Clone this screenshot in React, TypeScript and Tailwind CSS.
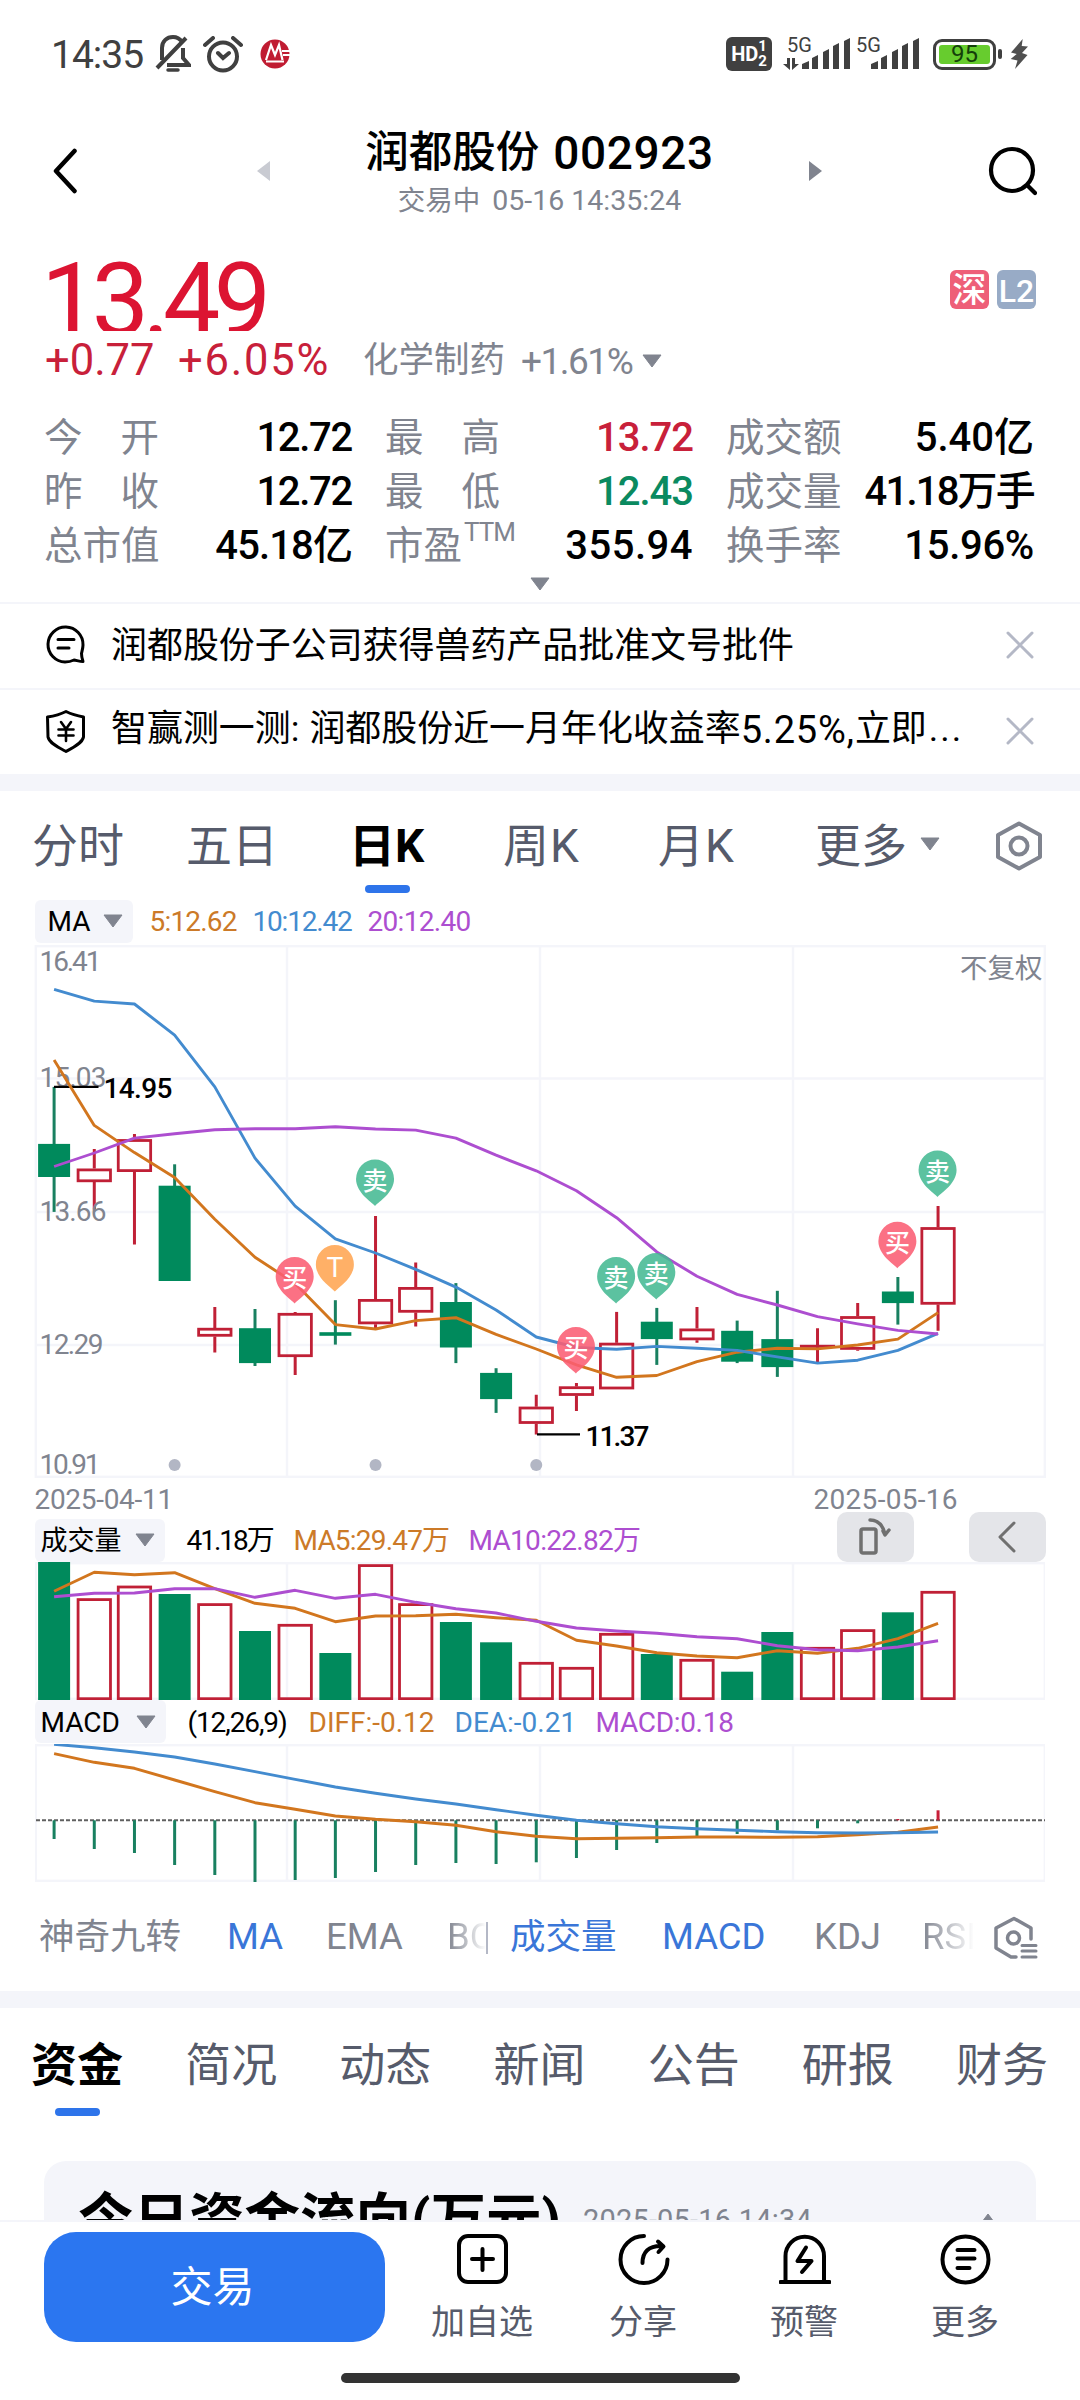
import React from 'react';

const N = 23;
const xAt = (i: number) => 19.1 + i * 40.18;

// [up, wickTop, wickBottom, bodyTop, bodyBottom]
type Candle = [boolean, number, number, number, number];

const candles: Candle[] = [
  [false, 141.9, 266.9, 198.9, 232],
  [true, 204, 264.4, 223.6, 237.1],
  [true, 189.1, 299.6, 194.2, 226.9],
  [false, 219.3, 336, 240.7, 336],
  [true, 362.1, 407.6, 382.9, 391.6],
  [false, 364, 421, 383.2, 418.1],
  [true, 366.9, 430.1, 368, 412],
  [false, 355.2, 399.6, 387.2, 390.8],
  [true, 270.9, 382.9, 354.1, 379.2],
  [true, 317.4, 381.4, 342.1, 367.6],
  [false, 338.1, 418.1, 357, 402.5],
  [false, 423.2, 467.9, 427.9, 454.1],
  [true, 449.8, 489.4, 461.7, 478.8],
  [true, 438.1, 466.1, 441.4, 450.8],
  [true, 366.9, 444.3, 397.8, 444.3],
  [false, 362.9, 419.9, 376.7, 394.1],
  [true, 362.1, 397.8, 383.6, 395.2],
  [false, 375.6, 418.1, 385.8, 416.7],
  [false, 345.8, 431.9, 394.1, 422.1],
  [true, 383.2, 418.1, 399.9, 401.8],
  [true, 358.1, 405.8, 371.2, 404.7],
  [false, 332, 379.6, 346.5, 358.1],
  [true, 261.1, 385.8, 282.2, 359.6],
];

const ma5 = [115, 180.4, 207.6, 232.4, 274.2, 312.3, 338.5, 379.6, 384, 375.6, 372.7, 389.4, 404, 419.9, 432.3, 430.5, 416.7, 407.2, 403.2, 403.9, 400, 394.1, 367.6];
const ma10 = [44.4, 56.1, 59, 90.2, 141.9, 213.1, 261.1, 293.8, 308, 324.3, 342.1, 365, 392, 402.5, 404.3, 401.4, 403.2, 405.4, 411.9, 418.1, 415.2, 405.4, 388.3];
const ma20 = [221.5, 208, 193.1, 188.7, 184.7, 183.7, 183.7, 181.8, 184, 185.1, 193.1, 210.2, 225.8, 245.8, 272.7, 306.9, 331.2, 349.4, 360, 371.6, 378.9, 385.4, 389];

const volumeTops = [0, 36.3, 23.7, 32, 41.3, 69, 62, 91, 2.3, 41.3, 60, 80.3, 100, 105, 71, 92, 97, 109.7, 70, 85, 67.3, 50.3, 29];
const volMa5 = [29.3, 10.3, 12.7, 10.7, 26.7, 41.3, 46.3, 59.7, 54, 53.7, 52.3, 55.7, 58.3, 78.3, 84, 90.7, 94, 95.7, 88.7, 91.3, 86.3, 76.7, 61.3];
const volMa10 = [34.7, 31.3, 31, 26.7, 26.7, 35.3, 28.3, 36.3, 32.3, 40.3, 46.7, 51, 59.3, 66, 69, 71.3, 74.7, 76.7, 83.7, 87.7, 88.7, 85, 78.7];

const macdEnds = [95, 105, 109, 121, 131, 138, 136, 134, 128, 121, 119, 120, 118.3, 114, 106, 99, 92, 90, 86.3, 84.3, 79.3, 75, 66.3];
const dea = [0.3, 3.7, 8, 13, 20, 27.7, 35.3, 43, 49.3, 55, 60, 65.7, 71.3, 76.3, 79.7, 82.7, 84.7, 86.3, 87.7, 88.7, 89, 88.7, 88];
const diff = [9.7, 18.3, 24.3, 36, 47.7, 58.7, 65.3, 72, 75.3, 77.7, 81.3, 87.7, 92.3, 94.7, 94.3, 93.7, 93, 93, 93.3, 92.7, 90.7, 88.3, 83];

const RED = '#c02036';
const GREEN = '#008a5c';
const ORANGE = '#d2761e';
const BLUE = '#438bcf';
const PURPLE = '#ad4ed0';
const GRID = '#f4f5fa';

const markers = [
  { i: 6, top: 312, label: '买', color: '#fb5d73' },
  { i: 7, top: 300, label: 'T', color: '#ffa552' },
  { i: 8, top: 214.6, label: '卖', color: '#45ba93' },
  { i: 13, top: 382, label: '买', color: '#fb5d73' },
  { i: 14, top: 312, label: '卖', color: '#45ba93' },
  { i: 15, top: 308, label: '卖', color: '#45ba93' },
  { i: 21, top: 276.7, label: '买', color: '#fb5d73' },
  { i: 22, top: 205.5, label: '卖', color: '#45ba93' },
];

const Line: React.FC<{ values: number[]; color: string }> = ({ values, color }) => (
  <polyline
    points={values.map((v, i) => `${xAt(i)},${v}`).join(' ')}
    fill="none"
    stroke={color}
    strokeWidth="2.9"
    strokeLinejoin="round"
  />
);

const Grid: React.FC<{ h: number; rows?: number[] }> = ({ h, rows = [] }) => (
  <g stroke={GRID} strokeWidth="2.4" fill="none">
    <rect x="0.8" y="1.2" width="1009" height={h - 2.4} />
    {[252, 505, 758].map((x) => (
      <path key={x} d={`M${x} 1V${h - 1}`} />
    ))}
    {rows.map((y) => (
      <path key={y} d={`M1 ${y}H1010`} />
    ))}
  </g>
);

const Caret: React.FC<{ className?: string; up?: boolean }> = ({ className = 'w-5 h-3.5', up }) => (
  <svg className={`shrink-0 text-[#80848f] ${className}`} viewBox="0 0 20 14" preserveAspectRatio="none">
    <path d={up ? 'M1 13L10 1L19 13Z' : 'M1 1H19L10 13Z'} fill="currentColor" stroke="currentColor" strokeLinejoin="round" />
  </svg>
);

const Signal: React.FC = () => (
  <svg className="w-12 h-8" viewBox="0 0 48 32" fill="#404040">
    <path d="M0 31v-5l7-3v8zM10 31V20l6-3v14zM21 31V14l6-3v20zM31 31V8l6-3v26zM42 31V3l6-3v31z" />
  </svg>
);

const StatusBar: React.FC = () => (
  <div className="flex h-[108px] items-center px-[51px] text-[#404040]">
    <span className="w-[104px] pt-[3px] text-[39px] leading-none tracking-[-1px]">14:35</span>
    <svg className="w-9 h-[38px]" viewBox="0 0 36 38" fill="none" stroke="currentColor" strokeWidth="4">
      <path d="M7 25V13c0-7 5-11 11-11 4 0 7 2 9 5M28 13v10l6 7H12M2 33L31 3" />
      <path d="M13 35h10" strokeWidth="3.500" strokeLinecap="round" />
    </svg>
    <svg className="ml-3 w-10 h-[37px]" viewBox="0 0 40 37" fill="none" stroke="currentColor" strokeWidth="4">
      <circle cx="20" cy="20.5" r="14" />
      <path d="M15 17l5 5 6-5M2 9l8-7M38 9l-8-7" strokeLinecap="round" />
    </svg>
    <svg className="ml-[17px] w-[30px] h-[30px]" viewBox="0 0 30 30">
      <circle cx="15" cy="15" r="14.5" fill="#c01c32" />
      <path d="M6 21L11 6l4 10 4-10 3.500 15M6 22.500h18M22 12h8M23 16h7" fill="none" stroke="#fff" strokeWidth="2.2" />
    </svg>
    <div className="ml-auto flex items-center">
      <div className="flex h-[34px] w-[46px] items-center justify-center rounded-md bg-[#404040] text-white">
        <span className="text-[20px] font-bold leading-none">HD</span>
        <span className="flex flex-col text-[15px] font-bold leading-[15px]">
          <span>1</span>
          <span>2</span>
        </span>
      </div>
      <div className="relative ml-[30px] h-8 w-12">
        <Signal />
        <span className="absolute -left-[15px] -top-[3px] text-[20px] leading-none">5G</span>
        <svg className="absolute -left-[19px] top-5 h-3 w-4" viewBox="0 0 16 12" fill="#404040">
          <path d="M4 0h3v12L0 6h4zM9 0h3v6h4l-7 6z" />
        </svg>
      </div>
      <div className="relative ml-[21px] h-8 w-12">
        <Signal />
        <span className="absolute -left-[15px] -top-[3px] text-[20px] leading-none">5G</span>
      </div>
      <div className="ml-3.5 flex h-[31px] w-[63px] rounded-[9px] border-[3.5px] border-[#404040] p-[3px]">
        <div className="flex flex-1 items-center justify-center rounded-[3px] bg-[#67cc2e] text-[24px] leading-none text-[#14400a]">95</div>
      </div>
      <div className="ml-0.5 h-2.5 w-1 rounded-sm bg-[#404040]" />
      <svg className="ml-2 h-[31px] w-[19px]" viewBox="0 0 19 31" fill="#505050">
        <path d="M12.700 0L1 13.500 6.700 15 .7 20l6.800 1.500L5 30l12.500-14-5.500-2 6-6.500-6.300-.5z" />
      </svg>
    </div>
  </div>
);

const Header: React.FC = () => (
  <div className="flex h-[132px] items-start px-[43px] pt-10">
    <svg className="ml-2.5 h-[46px] w-6" viewBox="0 0 24 46" fill="none" stroke="#000" strokeWidth="4.5" strokeLinecap="round" strokeLinejoin="round">
      <path d="M21.500 3L3 23l18.500 20" />
    </svg>
    <svg className="ml-[180px] mt-[13px] h-5 w-[13px]" viewBox="0 0 13 20" fill="#c9cbd2">
      <path d="M13 0v20L0 10z" />
    </svg>
    <div className="-mt-[18px] flex w-[539px] flex-col items-center">
      <div className="flex h-[46px] items-center text-[46px] font-medium leading-none text-black">
        <span className="mr-3.5 text-[43.5px]">润都股份</span>
        <span className="tracking-[0.6px]">002923</span>
      </div>
      <div className="mt-2 flex h-[34px] items-center text-[28.500px] leading-none text-[#80848f]">
        <span className="mr-3 text-[27.500px]">交易中</span>05-16 14:35:24
      </div>
    </div>
    <svg className="mt-[13px] h-5 w-[13px]" viewBox="0 0 13 20" fill="#80848f">
      <path d="M0 0v20l13-10z" />
    </svg>
    <svg className="-mt-0.5 ml-auto h-[50px] w-[50px]" viewBox="0 0 50 50" fill="none" stroke="#000" strokeWidth="4.200" strokeLinecap="round">
      <circle cx="25" cy="24" r="21" />
      <path d="M41 40l7 7" />
    </svg>
  </div>
);

interface Stat {
  label: string;
  value: string;
  tone?: string;
}

const stats: Stat[][] = [
  [
    { label: '今开', value: '12.72', tone: 'tracking-[-1.3px]' },
    { label: '最高', value: '13.72', tone: 'tracking-[-1px] text-[#c8203a]' },
    { label: '成交额', value: '5.40亿' },
  ],
  [
    { label: '昨收', value: '12.72', tone: 'tracking-[-1.3px]' },
    { label: '最低', value: '12.43', tone: 'tracking-[-1px] text-[#0a8a60]' },
    { label: '成交量', value: '41.18万手', tone: 'tracking-[-1.8px]' },
  ],
  [
    { label: '总市值', value: '45.18亿', tone: 'tracking-[-0.9px]' },
    { label: '市盈', value: '355.94', tone: 'tracking-[0.5px]' },
    { label: '换手率', value: '15.96%', tone: 'tracking-[-0.3px]' },
  ],
];

const StatLabel: React.FC<{ text: string }> = ({ text }) =>
  text === '市盈' ? (
    <span className="flex text-[38.500px] text-[#80848f]">
      市盈<sup className="-top-2 ml-0.5 h-6 text-[26px] leading-none tracking-[-1px]">TTM</sup>
    </span>
  ) : (
    <span className="flex w-[115px] justify-between text-[38.500px] text-[#80848f]">
      {text.split('').map((c) => (
        <span key={c}>{c}</span>
      ))}
    </span>
  );

const Quote: React.FC = () => (
  <div className="h-[362px] px-11">
    <div className="flex justify-between">
      <div className="-ml-[3px] h-[91px] w-[260px] overflow-hidden pt-[10px] text-[102px] leading-[100px] tracking-[-6.5px] text-[#dc1432]">13.49</div>
      <div className="mt-[30px] flex h-[39px] gap-2 text-white">
        <div className="flex w-[39px] items-center justify-center rounded-md bg-[#ee5f78] text-[34px] font-medium leading-none">深</div>
        <div className="flex w-[39px] items-center justify-center rounded-md bg-[#98abc6] pt-0.5 text-[32px] font-medium leading-none">L2</div>
      </div>
    </div>
    <div className="flex h-[58px] items-center pt-0.5 text-[43.500px] leading-none text-[#c8203a]">
      <span className="w-[134px] pl-px">+0.77</span>
      <span className="w-[185px] tracking-[1.8px]">+6.05%</span>
      <span className="text-[35.500px] text-[#80848f]">化学制药</span>
      <span className="ml-4 text-[37px] tracking-[-1.500px] text-[#80848f]">+1.61%</span>
      <Caret className="ml-2.5 h-3.5 w-5" />
    </div>
    <div className="mt-[22px] flex flex-col">
      {stats.map((row, r) => (
        <div key={r} className="flex h-[54px] justify-between pr-0.5 text-[40px] leading-none text-black">
          {row.map((s) => (
            <div key={s.label} className="flex w-[308px] items-center justify-between">
              <StatLabel text={s.label} />
              <span className={`whitespace-nowrap font-medium ${s.tone ?? ''}`}>{s.value}</span>
            </div>
          ))}
        </div>
      ))}
    </div>
    <div className="mt-1 flex justify-center">
      <Caret />
    </div>
  </div>
);

const CloseIcon: React.FC = () => (
  <svg className="-mt-0.5 ml-auto h-[28px] w-[28px]" viewBox="0 0 28 28" stroke="#b4b8c6" strokeWidth="3" strokeLinecap="round">
    <path d="M2 2l24 24M26 2L2 26" />
  </svg>
);

const Notices: React.FC = () => (
  <div className="leading-none text-black">
    <div className="flex h-[86px] items-center border-t-2 border-[#f4f5fa] pl-[45px] pr-[46px]">
      <svg className="-mt-1 h-10 w-10" viewBox="0 0 40 40" fill="none" stroke="#000" strokeWidth="3" strokeLinecap="round" strokeLinejoin="round">
        <path d="M38 37.500c-3 0-6-1-9-1.500-3 1.500-6 2-9 2A17.500 17.500 0 1 1 38 21c0 3-1 6-1.500 8.500 0 3 .5 5 1.500 8z" />
        <path d="M13 15.500h16M13 24h11" />
      </svg>
      <span className="ml-[26px] mt-0.5 text-[35.950px]">润都股份子公司获得兽药产品批准文号批件</span>
      <CloseIcon />
    </div>
    <div className="flex h-[86px] items-center border-t-2 border-[#f4f5fa] pl-[45px] pr-[46px]">
      <svg className="-mt-0.5 h-11 w-10" viewBox="0 0 40 44" fill="none" stroke="#000" strokeWidth="3" strokeLinecap="round" strokeLinejoin="round">
        <path d="M21 2.500C27 5.500 33 7 38.500 8v20c-1 6-10 10.500-17.500 14.500C13.500 38.500 4 34 3 28L2.500 8C9 7 15 5.500 21 2.500z" />
        <path d="M16 13l5 7 5-7M13.500 20.500h15M13.500 26.500h15M21 20v12" strokeWidth="2.600" />
      </svg>
      <span className="-mt-1 ml-[26px] flex items-center text-[35.950px]">
        智赢测一测:<span className="ml-2.5">润都股份近一月年化收益率</span>
        <span className="text-[38px] tracking-[0.8px]">5.25%,</span>立即<span className="ml-0.5 tracking-[2px]">...</span>
      </span>
      <CloseIcon />
    </div>
  </div>
);

const PeriodTabs: React.FC = () => (
  <div className="flex h-[104px] pl-[32px] pr-[37px] pt-[32px] text-[46px] leading-none text-[#565b6b]">
    <span className="w-[154px]">分时</span>
    <span className="w-[163px]">五日</span>
    <span className="relative w-[154px] font-bold text-black">
      日K
      <span className="absolute left-4 top-[62px] h-2 w-[45px] rounded-full bg-[#2e74ea]" />
    </span>
    <span className="w-[155px] tracking-[1px]">周K</span>
    <span className="w-[157px] tracking-[1px]">月K</span>
    <span>更多</span>
    <Caret className="ml-[13px] mt-3.5 h-3.5 w-5" />
    <svg className="-mt-0.5 ml-auto h-[50px] w-12" viewBox="0 0 48 50" fill="none" stroke="#80848f" strokeWidth="4" strokeLinejoin="round">
      <path d="M24 2.500L45 14v22L24 47.500 3 36V14z" />
      <circle cx="24" cy="25" r="8.500" />
    </svg>
  </div>
);

const Chip: React.FC<{ text: string; className: string }> = ({ text, className }) => (
  <span className={`flex h-[43px] items-center justify-between rounded-md bg-[#f4f5fa] pr-2.5 text-black ${className}`}>
    <span className="pt-0.5">{text}</span>
    <Caret />
  </span>
);

const KChart: React.FC = () => (
  <svg className="block h-[533px] w-[1010px] overflow-visible" viewBox="0 0 1010 533">
    <Grid h={533} rows={[133.500, 267, 400]} />
    {candles.map(([up, t, b, bt, bb], i) => (
      <g key={i}>
        <path d={up ? `M${xAt(i)} ${t}V${bt}M${xAt(i)} ${bb}V${b}` : `M${xAt(i)} ${t}V${b}`} stroke={up ? RED : '#188060'} strokeWidth="3" />
        {up ? (
          <rect x={xAt(i) - 16.2} y={bt + 1.300} width="32.4" height={Math.max(bb - bt - 2.6, 0.2)} fill="none" stroke={RED} strokeWidth="2.8" />
        ) : (
          <rect x={xAt(i) - 16} y={bt} width="32" height={bb - bt} fill={GREEN} />
        )}
      </g>
    ))}
    <g fill="#80848f" fontSize="28">
      <text x="4.500" y="25.500" textLength="62">16.41</text>
      <text x="4.500" y="141.500" textLength="67">15.03</text>
      <text x="4.500" y="275.500" textLength="67">13.66</text>
      <text x="4.500" y="408.500" textLength="64">12.29</text>
      <text x="4.500" y="528.500" textLength="61">10.91</text>
      <text x="925" y="32.500" fontSize="27.500">不复权</text>
    </g>
    <path d="M19 141.900H63.500M502 489.400H545" stroke="#000" strokeWidth="2.400" />
    <Line values={ma5} color={ORANGE} />
    <Line values={ma10} color={BLUE} />
    <Line values={ma20} color={PURPLE} />
    <g fontSize="28" fontWeight="500">
      <text x="68.500" y="153" textLength="69">14.95</text>
      <text x="550.500" y="500.500" textLength="64">11.37</text>
    </g>
    {[3, 8, 12].map((i) => (
      <circle key={i} cx={xAt(i)} cy="519.900" r="6" fill="#b2b6c4" />
    ))}
    {markers.map((m) => (
      <g key={m.i} transform={`translate(${xAt(m.i) - 0.5} ${m.top})`}>
        <path d="M0 46.500C-4 42-19 33-19 19.500a19 19.500 0 1 1 38 0C19 33 4 42 0 46.500z" fill={m.color} fillOpacity="0.88" />
        <text y={m.label === 'T' ? 32 : 30} textAnchor="middle" fill="#fff" fontSize={m.label === 'T' ? 28 : 25} fontWeight={m.label === 'T' ? 400 : 500}>
          {m.label}
        </text>
      </g>
    ))}
  </svg>
);

const VolumeChart: React.FC = () => (
  <svg className="block h-[138px] w-[1010px]" viewBox="0 0 1010 138">
    <Grid h={138} />
    {volumeTops.map((t, i) =>
      candles[i][0] ? (
        <rect key={i} x={xAt(i) - 16.2} y={t + 1.300} width="32.4" height={135.400 - t} fill="none" stroke={RED} strokeWidth="2.8" />
      ) : (
        <rect key={i} x={xAt(i) - 16} y={t} width="32" height={138 - t} fill={GREEN} />
      ),
    )}
    <Line values={volMa5} color={ORANGE} />
    <Line values={volMa10} color={PURPLE} />
  </svg>
);

const MacdChart: React.FC = () => (
  <svg className="block h-[138px] w-[1010px]" viewBox="0 0 1010 138">
    <Grid h={138} />
    <path d="M1 76.300H1010" stroke="#606060" strokeWidth="2" strokeDasharray="4 2" />
    {macdEnds.map((y, i) => (
      <path key={i} d={`M${xAt(i)} 76.300V${y}`} stroke={i > N - 3 ? '#c8203a' : '#188060'} strokeWidth="3" />
    ))}
    <Line values={diff} color={ORANGE} />
    <Line values={dea} color={BLUE} />
  </svg>
);

const ChartPanel: React.FC = () => (
  <div className="px-[34.500px] text-[28px] leading-none">
    <div className="flex h-[50px] items-center">
      <Chip text="MA" className="mt-0.5 w-[98px] pl-[13px]" />
      <span className="ml-[17px] w-[103px] pt-1 tracking-[-0.8px] text-[#cc7a28]">5:12.62</span>
      <span className="w-[115px] pt-1 tracking-[-1.2px] text-[#438bcf]">10:12.42</span>
      <span className="pt-1 tracking-[-0.7px] text-[#ad4ed0]">20:12.40</span>
    </div>
    <KChart />
    <div className="flex h-[34px] items-center pt-2.5 text-[#80848f]">
      <span className="w-[779px] tracking-[-0.3px]">2025-04-11</span>
      <span className="tracking-[0.3px]">2025-05-16</span>
    </div>
    <div className="flex h-[50px] items-center">
      <Chip text="成交量" className="mt-1.5 w-[130px] pl-1.5 text-[27px]" />
      <span className="ml-[22px] mt-[7px] w-[107px] tracking-[-2px] text-black">41.18万</span>
      <span className="mt-[7px] w-[175px] tracking-[-0.8px] text-[#cc7a28]">MA5:29.47万</span>
      <span className="mt-[7px] tracking-[-0.7px] text-[#ad4ed0]">MA10:22.82万</span>
      <span className="ml-auto flex h-[50px] w-[77px] items-center justify-center rounded-[10px] bg-[#e4e5e9]">
        <svg className="h-[38px] w-8" viewBox="0 0 32 38" fill="none" stroke="#707070" strokeWidth="3.500" strokeLinecap="round" strokeLinejoin="round">
          <rect x="2" y="11" width="15" height="24" rx="2" />
          <path d="M11 2c8 0 13 6 15 14M24 13l2 4 4-5" />
        </svg>
      </span>
      <span className="ml-[55px] flex h-[50px] w-[77px] items-center justify-center rounded-[10px] bg-[#e4e5e9]">
        <svg className="h-8 w-5" viewBox="0 0 20 32" fill="none" stroke="#707070" strokeWidth="3" strokeLinecap="round" strokeLinejoin="round">
          <path d="M17 2L3 16l14 14" />
        </svg>
      </span>
    </div>
    <VolumeChart />
    <div className="flex h-11 items-start">
      <Chip text="MACD" className="w-[131px] pl-1.5" />
      <span className="ml-[22px] flex h-[43px] w-[121px] items-center pt-0.5 tracking-[-1.1px] text-black">(12,26,9)</span>
      <span className="flex h-[43px] w-[146px] items-center pt-0.5 text-[#cc7a28]">DIFF:-0.12</span>
      <span className="flex h-[43px] w-[141px] items-center pt-0.5 text-[#438bcf]">DEA:-0.21</span>
      <span className="flex h-[43px] items-center pt-0.5 tracking-[-0.3px] text-[#ad4ed0]">MACD:0.18</span>
    </div>
    <MacdChart />
  </div>
);

const Indicators: React.FC = () => (
  <div className="flex h-[109px] items-center pl-[39px] pr-[41px] pt-0.5 text-[36.500px] leading-none text-[#80848f]">
    <span className="w-[188px] text-[35.500px]">神奇九转</span>
    <span className="w-[99px] text-[#3a76d8]">MA</span>
    <span className="w-[121px]">EMA</span>
    <span className="w-[39px] overflow-hidden bg-gradient-to-r from-[#80848f] to-white bg-clip-text text-transparent">BOLL</span>
    <span className="h-8 w-0.5 bg-[#b4b8c6]" />
    <span className="ml-[22px] w-[152px] text-[35.500px] text-[#3a76d8]">成交量</span>
    <span className="w-[152px] text-[#3a76d8]">MACD</span>
    <span className="w-[108px]">KDJ</span>
    <span className="w-[52px] overflow-hidden bg-gradient-to-r from-[#80848f] to-white bg-clip-text text-transparent">RSI</span>
    <svg className="ml-auto h-11 w-[46px]" viewBox="0 0 46 44" fill="none" stroke="#80848f" strokeWidth="3.500" strokeLinejoin="round" strokeLinecap="round">
      <path d="M38 23V12L21 2.500 3 12v20l15 9h5" />
      <circle cx="20.500" cy="22" r="6" />
      <path d="M29 29.500h14M29 35h14M29 41h14" strokeWidth="3" />
    </svg>
  </div>
);

const infoTabs = ['简况', '动态', '新闻', '公告', '研报', '财务'];

const InfoTabs: React.FC = () => (
  <div className="flex h-[153px] justify-between pl-[31px] pr-8 pt-[34px] text-[46px] leading-none text-[#565b6b]">
    <span className="relative font-bold text-black">
      资金
      <span className="absolute left-6 top-[66px] h-2 w-[45px] rounded-full bg-[#2e74ea]" />
    </span>
    {infoTabs.map((t) => (
      <span key={t}>{t}</span>
    ))}
  </div>
);

const FundCard: React.FC = () => (
  <div className="h-[59px] overflow-hidden px-11">
    <div className="flex h-[200px] items-start rounded-t-[22px] bg-[#f4f5fa] pl-[34px] pr-[38px] pt-8">
      <span className="text-[55.500px] font-bold leading-none text-black">今日资金流向(万元)</span>
      <span className="ml-[22px] mt-[13px] text-[29px] leading-none tracking-[0.2px] text-[#80848f]">2025-05-16 14:34</span>
      <Caret up className="ml-auto mt-5 h-3.5 w-5" />
    </div>
  </div>
);

const actions = [
  {
    label: '加自选',
    icon: (
      <>
        <rect x="2" y="2" width="47" height="46" rx="9" />
        <path d="M25.500 15v21M15 25h21" />
      </>
    ),
  },
  {
    label: '分享',
    icon: (
      <>
        <path d="M26 2a23.500 23.500 0 1 0 23.500 23.500" />
        <path d="M24.500 29c0-11 6-17.500 19.500-17M40 7.500l5.500 5-5 5.500" />
      </>
    ),
  },
  {
    label: '预警',
    icon: (
      <>
        <path d="M6.500 47V22a19 19 0 0 1 38.500 0v25M1.500 48h49" />
        <path d="M27 13.500L18.500 27H32.500L23 38" />
      </>
    ),
  },
  {
    label: '更多',
    icon: (
      <>
        <circle cx="25.500" cy="25.500" r="23" />
        <path d="M17.500 16h17M17.500 24.500h17M17.500 34h12" />
      </>
    ),
  },
];

const BottomBar: React.FC = () => (
  <div className="h-[181px] border-t-2 border-[#f4f5fa] bg-white">
    <div className="flex h-[151px] pl-11 pr-[34px] pt-2.5">
      <div className="flex h-[110px] w-[341px] items-center justify-center rounded-[32px] bg-[#2b76f0] pr-1 pt-0.5 text-[42px] leading-none text-white">交易</div>
      <div className="ml-[17px] flex flex-1">
        {actions.map((a) => (
          <div key={a.label} className="flex flex-1 flex-col items-center pt-0.5">
            <svg className="h-[51px] w-[52px]" viewBox="0 0 52 51" fill="none" stroke="#000" strokeWidth="4" strokeLinecap="round" strokeLinejoin="round">
              {a.icon}
            </svg>
            <span className="mt-5 pr-px text-[34px] leading-none text-[#565b6b]">{a.label}</span>
          </div>
        ))}
      </div>
    </div>
    <div className="mx-auto h-2.5 w-[399px] rounded-full bg-[#333333]" />
  </div>
);

export default function App() {
  return (
    <div className="h-[2400px] w-[1080px] overflow-hidden bg-white font-[Roboto,'Noto_Sans_CJK_SC',sans-serif]">
      <StatusBar />
      <Header />
      <Quote />
      <Notices />
      <div className="h-[17px] bg-[#f4f5fa]" />
      <PeriodTabs />
      <ChartPanel />
      <Indicators />
      <div className="h-[17px] bg-[#f4f5fa]" />
      <InfoTabs />
      <FundCard />
      <BottomBar />
    </div>
  );
}
